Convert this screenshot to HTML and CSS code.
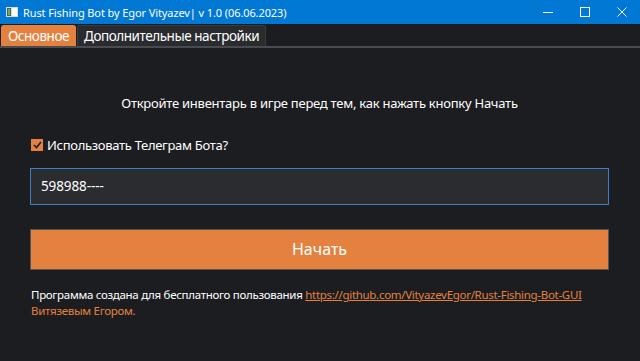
FILE: index.html
```html
<!DOCTYPE html>
<html lang="ru">
<head>
<meta charset="utf-8">
<link rel="stylesheet" href="styles.css">
</head>
<body>
<div class="window">
  <div class="titlebar">
    <div class="title-left">
      <svg class="app-icon" width="12" height="10" viewBox="0 0 12 10">
        <rect x="0" y="0" width="12" height="10" fill="#d9d9d9"/>
        <rect x="1" y="1" width="4" height="8" fill="#3c6e4f"/>
        <rect x="6" y="1" width="5" height="8" fill="#ffffff"/>
        <rect x="2" y="2" width="2" height="6" fill="#6aa57d"/>
      </svg>
      <span class="title">Rust Fishing Bot by Egor Vityazev| v 1.0 (06.06.2023)</span>
    </div>
    <div class="controls">
      <span class="ctl"><svg width="10" height="10" viewBox="0 0 10 10"><line x1="0" y1="5.5" x2="10" y2="5.5" stroke="#fff" stroke-width="1"/></svg></span>
      <span class="ctl"><svg width="10" height="10" viewBox="0 0 10 10"><rect x="0.5" y="0.5" width="9" height="9" fill="none" stroke="#fff" stroke-width="1"/></svg></span>
      <span class="ctl"><svg width="10" height="10" viewBox="0 0 10 10"><path d="M0.5 0.5 L9.5 9.5 M9.5 0.5 L0.5 9.5" stroke="#fff" stroke-width="1"/></svg></span>
    </div>
  </div>
  <div class="tabs">
    <div class="tab active">Основное</div>
    <div class="tab">Дополнительные настройки</div>
  </div>
  <div class="content">
    <p class="hint">Откройте инвентарь в игре перед тем, как нажать кнопку Начать</p>
    <label class="check">
      <span class="box"><svg width="9" height="8" viewBox="0 0 9 8"><path d="M1 4 L3.5 6.5 L8 1" fill="none" stroke="#1c1d21" stroke-width="1.6"/></svg></span>
      <span>Использовать Телеграм Бота?</span>
    </label>
    <div class="input">598988----</div>
    <div class="btn">Начать</div>
    <p class="footer">Программа создана для бесплатного пользования <a class="link">https://github.com/VityazevEgor/Rust-Fishing-Bot-GUI</a><br><span class="author">Витязевым Егором.</span></p>
  </div>
</div>
</body>
</html>
```
FILE: styles.css
```css
* { box-sizing: border-box; }
html, body { margin: 0; padding: 0; }
body {
  width: 640px;
  height: 361px;
  background: #1c1d21;
  font-family: "Noto Sans", "Open Sans", sans-serif;
  color: #ffffff;
  overflow: hidden;
}
.window { display: flex; flex-direction: column; height: 361px; }
.titlebar {
  height: 24px;
  background: #0078d4;
  display: flex;
  align-items: center;
  justify-content: space-between;
}
.title-left { display: flex; align-items: center; }
.app-icon { margin-left: 6px; margin-right: 5px; }
.title { font-size: 11px; color: #fff; letter-spacing: -0.1px; }
.controls { display: flex; align-items: center; height: 24px; }
.ctl { width: 37px; display: flex; justify-content: center; align-items: center; }
.tabs {
  display: flex;
  align-items: flex-end;
  height: 24px;
  padding-left: 1px;
  border-bottom: 2px solid #4a4b50;
  background: #1c1d21;
}
.tab {
  height: 21px;
  padding: 0 6px;
  font-size: 13.5px;
  line-height: 21px;
  background: #2a2b2f;
  border: 1px solid #3a3b40;
  border-bottom: none;
  border-radius: 3px 3px 0 0;
  color: #fff;
  letter-spacing: -0.45px;
}
.tab.active { background: #e5813e; border-color: #e5813e; margin-right: 1px; }
.content { padding: 0 31px 0 30px; display: flex; flex-direction: column; }
.hint { margin: 46px 0 0; text-align: center; font-size: 13px; letter-spacing: -0.25px; line-height: 18px; }
.check { display: flex; align-items: center; margin-top: 24px; font-size: 13px; letter-spacing: -0.3px; height: 18px; margin-left: 1px; }
.box {
  width: 12px; height: 12px; background: #e5813e;
  display: flex; align-items: center; justify-content: center; margin-right: 4px;
}
.input {
  margin-top: 14px;
  height: 37px;
  border: 1px solid #3f7ccc;
  background: #2b2c30;
  font-size: 13.5px;
  padding-left: 10px;
  line-height: 35px;
  letter-spacing: -0.1px;
}
.btn {
  margin-top: 24px;
  height: 41px;
  border: 1px solid #555;
  background: #e5813e;
  text-align: center;
  font-size: 16px;
  line-height: 39px;
}
.footer { margin: 17px 0 0 1px; font-size: 11.5px; line-height: 16px; letter-spacing: -0.3px; }
.link { color: #e5813e; text-decoration: underline; }
.author { color: #e5813e; }
```
